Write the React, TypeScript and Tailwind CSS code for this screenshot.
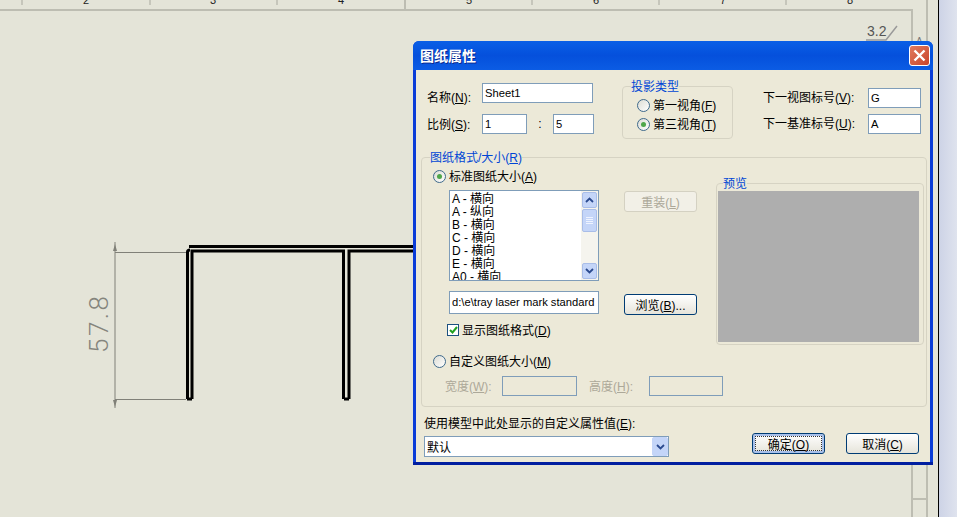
import { ReactNode } from "react";

const FONT = "[font-family:'Liberation_Sans','Noto_Sans_CJK_SC',sans-serif]";

const SHEET_ITEMS = ["A - 横向", "A - 纵向", "B - 横向", "C - 横向", "D - 横向", "E - 横向", "A0 - 横向"];

function Radio({ checked }: { checked?: boolean }) {
    return (
        <span className="w-[13px] h-[13px] shrink-0 rounded-full border border-[#3f6a8c] bg-linear-to-br from-[#dcdcd4] to-white flex items-center justify-center">
            {checked && <span className="w-[5px] h-[5px] rounded-full bg-[#4fa64a]" />}
        </span>
    );
}

function RadioRow({ checked, children, className = "" }: { checked?: boolean; children: ReactNode; className?: string }) {
    return (
        <div className={`flex items-center gap-[3px] h-[16px] ${className}`}>
            <Radio checked={checked} />
            <span className="whitespace-nowrap h-[16px] leading-[18px]">{children}</span>
        </div>
    );
}

function Field({ value, className = "", disabled }: { value?: string; className?: string; disabled?: boolean }) {
    return (
        <div
            className={`h-[21px] shrink-0 border border-[#7f9db9] px-[2px] text-[11.2px] leading-[19px] whitespace-nowrap overflow-hidden ${
                disabled ? "bg-[#ece9d8]" : "bg-white"
            } ${className}`}
        >
            {value}
        </div>
    );
}

function Button({ children, disabled, primary, className = "" }: { children: ReactNode; disabled?: boolean; primary?: boolean; className?: string }) {
    if (disabled) {
        return (
            <div className={`w-[73px] h-[21px] rounded-[3px] border border-[#d4d1c2] bg-[#f2f0e7] text-[#aca899] flex items-center justify-center pt-[2px] ${className}`}>
                {children}
            </div>
        );
    }
    return (
        <div
            className={`w-[73px] h-[21px] rounded-[3px] border border-[#003c74] bg-linear-to-b from-white to-[#e6e4da] flex items-center justify-center ${
                primary ? "shadow-[inset_0_0_0_2px_#a8c0ea]" : "pt-[2px]"
            } ${className}`}
        >
            {primary ? (
                <span className="w-[67px] h-[15px] border border-dotted border-[#333] flex items-center justify-center leading-none pt-[2px]">{children}</span>
            ) : (
                children
            )}
        </div>
    );
}

function ScrollButton({ up, className = "" }: { up?: boolean; className?: string }) {
    return (
        <div className={`w-[15px] rounded-[2px] border border-[#a9bde8] bg-[#c4d5f8] flex items-center justify-center ${className}`}>
            <svg width="9" height="6" viewBox="0 0 9 6" fill="none" stroke="#2b4a8f" strokeWidth="1.8">
                <path d={up ? "M1 5l3.5-3.5L8 5" : "M1 1l3.5 3.5L8 1"} />
            </svg>
        </div>
    );
}

function CadSheet() {
    const labels = [
        { n: "2", x: 86 },
        { n: "3", x: 213 },
        { n: "4", x: 341 },
        { n: "5", x: 469 },
        { n: "6", x: 596 },
        { n: "7", x: 723 },
        { n: "8", x: 850 },
    ];
    return (
        <svg width="938" height="517" viewBox="0 0 938 517" className="block shrink-0">
            <g stroke="#bdbdb2" strokeWidth="2" fill="none">
                <path d="M0 10H912V517" />
                <path d="M927 0V517" />
                <path d="M405 0V10" />
                <path d="M912 499H927" />
            </g>
            <g stroke="#bdbdb2" strokeWidth="1.5">
                {[22, 150, 277, 532, 659, 786].map((x) => (
                    <path key={x} d={`M${x} 0V5`} />
                ))}
            </g>
            {labels.map((l) => (
                <text key={l.n} x={l.x} y="4" textAnchor="middle" fontSize="11" fill="#222" fontFamily="'Liberation Sans', sans-serif">
                    {l.n}
                </text>
            ))}

            {/* surface finish mark */}
            <text x="867" y="36" fontSize="14" fill="#555" fontFamily="'Liberation Sans', sans-serif">
                3.2
            </text>
            <path d="M866 40H886L897 26" stroke="#999" strokeWidth="1.5" fill="none" />
            <text x="916" y="45" fontSize="10" fill="#777" fontFamily="'Liberation Sans', sans-serif">
                A
            </text>

            {/* sheet metal section */}
            <g stroke="#000" strokeWidth="3" fill="none">
                <path d="M187.5 399V252Q187.5 250 190 250" />
                <path d="M192 399V251H343.5V399" />
                <path d="M189 246.5H413" />
                <path d="M349 399V251H413" />
                <path d="M187 399H192" />
                <path d="M344 399H349" />
            </g>

            {/* dimension */}
            <g stroke="#808078" strokeWidth="1" fill="none">
                <path d="M115 242V408" />
                <path d="M115 252.5H186" />
                <path d="M115 399.5H186" />
            </g>
            <path d="M115 244l-2 7h4zM115 407l-2-7h4z" fill="#808078" />
            <text
                transform="translate(108 353) rotate(-90)"
                fontSize="26"
                letterSpacing="2.5"
                fill="#85857d"
                fontFamily="'Roboto', sans-serif"
                fontWeight="300"
            >
                57.8
            </text>
        </svg>
    );
}

export default function App() {
    return (
        <div className={`relative w-[957px] h-[517px] overflow-hidden flex bg-[#e4e4d8] text-[12px] text-black ${FONT}`}>
            <CadSheet />
            <div className="flex-1 border-l border-l-black bg-linear-to-r from-[#cdd3e6] to-[#dfe3ee]" />

            {/* dialog */}
            <div className="absolute left-[413px] top-[41px] w-[520px] h-[424px] flex flex-col rounded-t-[6px] overflow-hidden bg-[#0a3cd8] border-b-[3px] border-b-[#001ea0]">
                <div className="h-[29px] shrink-0 flex items-center justify-between pl-[7px] pr-[3px] bg-linear-to-b from-[#0a5fe6] via-[#0550dc] to-[#0b5ce4]">
                    <span className="text-[14px] font-bold text-white pt-[2px] [text-shadow:1px_1px_#0a2a90]">图纸属性</span>
                    <div className="w-[21px] h-[21px] rounded-[3px] border border-white bg-linear-to-br from-[#e07a5e] to-[#c9432a] flex items-center justify-center">
                        <svg width="13" height="13" viewBox="0 0 13 13" stroke="#fff" strokeWidth="2.4">
                            <path d="M1.5 1.5l10 10M11.5 1.5l-10 10" />
                        </svg>
                    </div>
                </div>

                <div className="flex-1 mx-[3px] bg-[#ece9d8] flex flex-col">
                    {/* top row */}
                    <div className="h-[79px] shrink-0 flex items-start">
                        <div className="w-[206px] shrink-0 pl-[11px] pt-[13px] flex flex-col gap-[11px]">
                            <div className="flex items-center h-[20px]">
                                <span className="w-[55px] pt-[9px]">名称(<u>N</u>):</span>
                                <Field value="Sheet1" className="w-[111px] !h-[20px]" />
                            </div>
                            <div className="flex items-center h-[20px]">
                                <span className="w-[55px] pt-[2px]">比例(<u>S</u>):</span>
                                <Field value="1" className="w-[45px] !h-[20px]" />
                                <span className="w-[26px] text-center">:</span>
                                <Field value="5" className="w-[41px] !h-[20px]" />
                            </div>
                        </div>
                        <fieldset className="w-[111px] h-[61px] mt-[8px] shrink-0 border border-[#d6d3c3] rounded-[4px]">
                            <legend className="ml-[8px] text-[#0046d5] h-[16px] leading-[18px]">投影类型</legend>
                            <div className="pl-[14px] pt-[3px] flex flex-col gap-[3px]">
                                <RadioRow>第一视角(<u>F</u>)</RadioRow>
                                <RadioRow checked>第三视角(<u>T</u>)</RadioRow>
                            </div>
                        </fieldset>
                        <div className="ml-[30px] mt-[18px] flex flex-col gap-[6px]">
                            <div className="flex items-center h-[20px]">
                                <span className="w-[105px] whitespace-nowrap">下一视图标号(<u>V</u>):</span>
                                <Field value="G" className="w-[53px] !h-[20px]" />
                            </div>
                            <div className="flex items-center h-[20px]">
                                <span className="w-[105px] whitespace-nowrap">下一基准标号(<u>U</u>):</span>
                                <Field value="A" className="w-[53px] !h-[20px]" />
                            </div>
                        </div>
                    </div>

                    {/* sheet format group */}
                    <fieldset className="ml-[5px] w-[506px] h-[258px] shrink-0 border border-[#d6d3c3] rounded-[4px]">
                        <legend className="ml-[8px] text-[#0046d5] h-[16px] leading-[18px]">图纸格式/大小(<u>R</u>)</legend>
                        <div className="flex h-[180px]">
                            <div className="w-[177px] shrink-0">
                                <RadioRow checked className="ml-[11px] mt-[3px]">标准图纸大小(<u>A</u>)</RadioRow>
                                <div className="ml-[27px] mt-[6px] w-[150px] h-[91px] border border-[#7f9db9] bg-white flex overflow-hidden">
                                    <div className="flex-1 pl-[2px] pt-[2px] overflow-hidden">
                                        {SHEET_ITEMS.map((item, i) => (
                                            <div key={i} className="h-[13px] leading-[13px] whitespace-nowrap">
                                                {item}
                                            </div>
                                        ))}
                                    </div>
                                    <div className="w-[17px] shrink-0 bg-[#f5f4ee] flex flex-col items-center py-px">
                                        <ScrollButton up className="h-[16px]" />
                                        <div className="w-[15px] h-[23px] mt-px rounded-[2px] border border-[#a9bde8] bg-[#c4d5f8] flex flex-col items-center justify-center gap-px">
                                            <span className="w-[7px] h-px bg-[#eef3ff]" />
                                            <span className="w-[7px] h-px bg-[#eef3ff]" />
                                            <span className="w-[7px] h-px bg-[#eef3ff]" />
                                            <span className="w-[7px] h-px bg-[#eef3ff]" />
                                        </div>
                                        <ScrollButton className="h-[16px] mt-auto" />
                                    </div>
                                </div>
                                <Field value="d:\e\tray laser mark standard" className="ml-[27px] mt-[10px] w-[150px] !h-[23px] !leading-[20px]" />
                                <div className="ml-[25px] mt-[8px] flex items-center gap-[3px] h-[16px]">
                                    <span className="w-[12px] h-[12px] border border-[#1c5180] bg-white flex items-center justify-center">
                                        <svg width="9" height="8" viewBox="0 0 9 8" fill="none" stroke="#21a121" strokeWidth="2">
                                            <path d="M1 4l2.5 2.5L8 1" />
                                        </svg>
                                    </span>
                                    <span className="whitespace-nowrap h-[16px] leading-[18px]">显示图纸格式(<u>D</u>)</span>
                                </div>
                            </div>
                            <div className="ml-[25px] w-[73px] shrink-0 pt-[26px] flex flex-col gap-[82px]">
                                <Button disabled>重装(<u>L</u>)</Button>
                                <Button>浏览(<u>B</u>)...</Button>
                            </div>
                            <fieldset className="ml-[19px] mt-[10px] w-[208px] h-[170px] shrink-0 border border-[#d6d3c3] rounded-[4px]">
                                <legend className="ml-[6px] text-[#0046d5] h-[16px] leading-[18px]">预览</legend>
                                <div className="ml-px w-[201px] h-[151px] bg-[#aeaeae]" />
                            </fieldset>
                        </div>
                        <RadioRow className="ml-[11px] mt-[8px]">自定义图纸大小(<u>M</u>)</RadioRow>
                        <div className="ml-[23px] mt-[7px] flex items-center text-[#aca899]">
                            <span className="w-[57px] pt-[2px]">宽度(<u>W</u>):</span>
                            <Field disabled className="w-[75px] !h-[20px]" />
                            <span className="ml-[12px] w-[60px] pt-[2px]">高度(<u>H</u>):</span>
                            <Field disabled className="w-[74px] !h-[20px]" />
                        </div>
                    </fieldset>

                    {/* bottom row */}
                    <div className="flex-1 flex pl-[8px] pr-[11px]">
                        <div className="w-[245px] shrink-0">
                            <div className="mt-[8px] h-[16px] leading-[18px] whitespace-nowrap">使用模型中此处显示的自定义属性值(<u>E</u>):</div>
                            <div className="mt-[5px] h-[21px] border border-[#7f9db9] bg-white flex items-center justify-between pl-[2px]">
                                <span className="pt-[2px]">默认</span>
                                <ScrollButton className="h-[19px] !w-[16px] !border-[#c4d5f8]" />
                            </div>
                        </div>
                        <div className="ml-auto pt-[26px] flex gap-[21px]">
                            <Button primary>确定(<u>O</u>)</Button>
                            <Button>取消(<u>C</u>)</Button>
                        </div>
                    </div>
                </div>
            </div>
        </div>
    );
}
